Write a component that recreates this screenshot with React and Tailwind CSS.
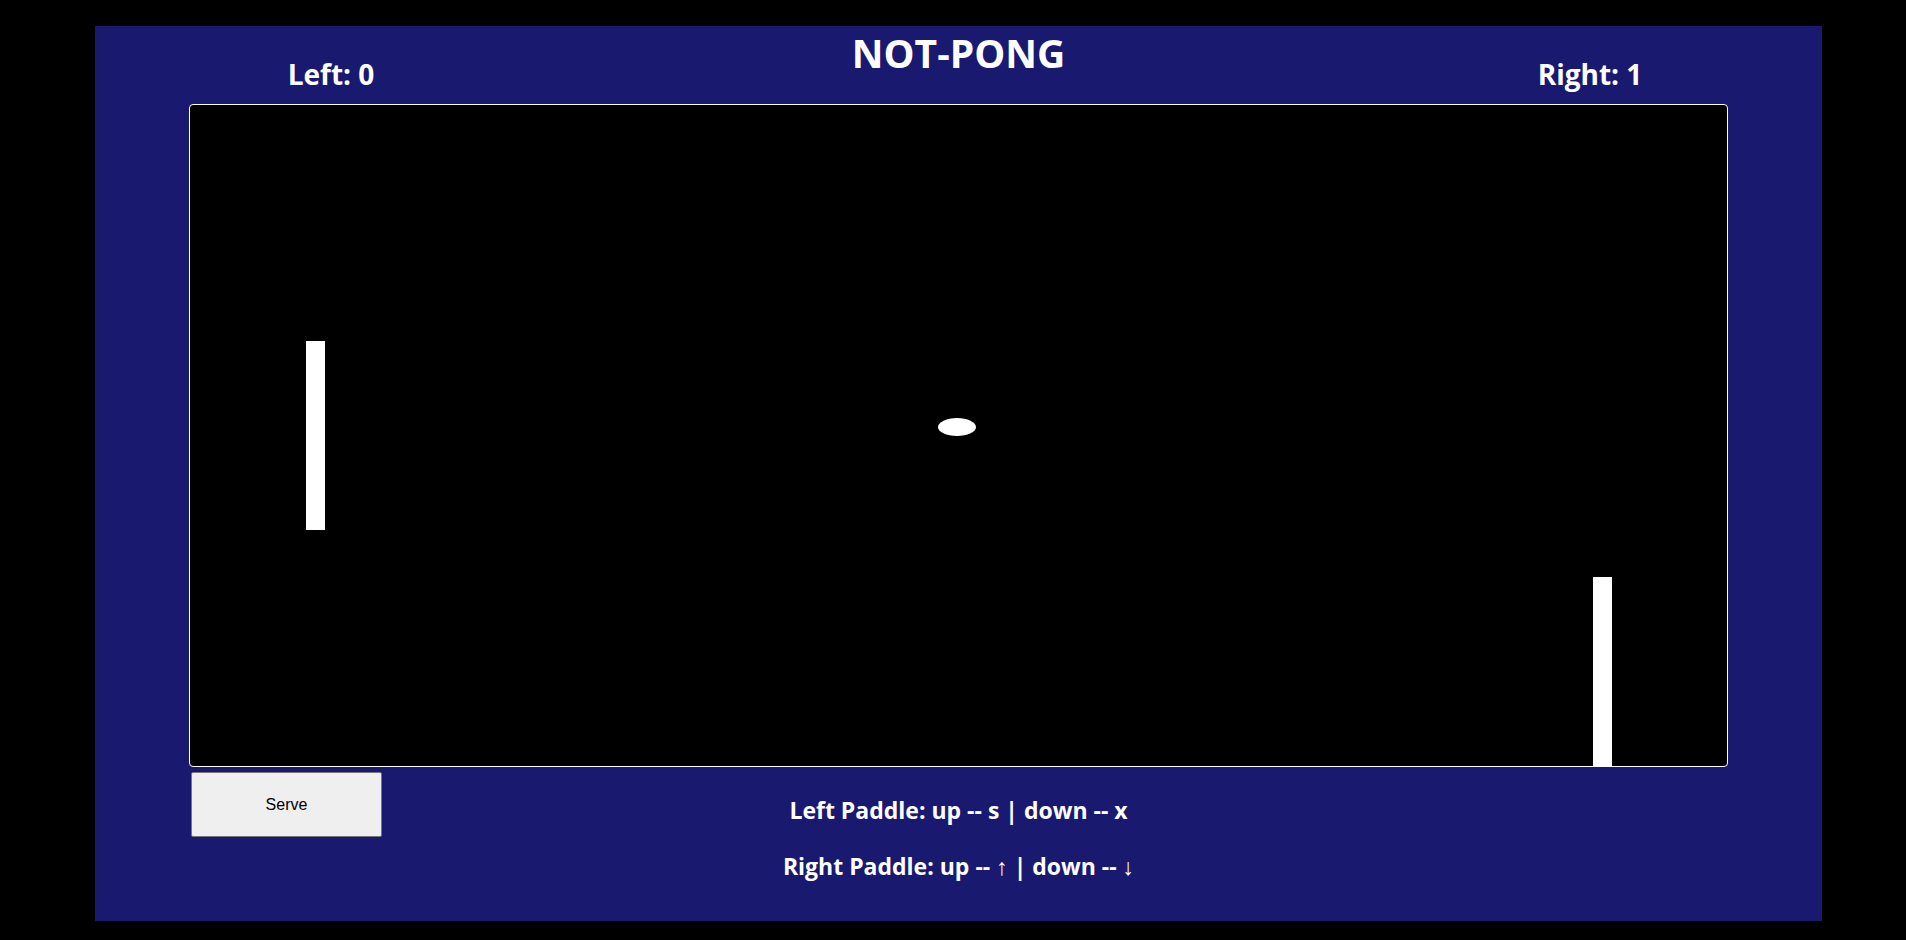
export default function App() {
  return (
    <div className="min-h-[940px] w-full bg-black pt-[26px] pl-[95px]">
      <div
        className="flex h-[895px] w-[1727px] flex-col bg-[#1a1970] text-white"
        style={{ fontFamily: '"Open Sans", "Noto Sans", sans-serif' }}
      >
        {/* header */}
        <div className="grid h-[78px] grid-cols-[472px_1fr_464px]">
          <div className="pt-[30px] text-center text-[28px] leading-[36px] font-bold">Left: 0</div>
          <div className="pr-[8px] text-center text-[39px] leading-[54px] font-bold">NOT-PONG</div>
          <div className="pt-[30px] text-center text-[28px] leading-[36px] font-bold">Right: 1</div>
        </div>

        {/* board */}
        <div className="relative mx-[94px] h-[663px] rounded-[4px] border border-white bg-black">
          <div className="absolute left-[116px] top-[236px] h-[189px] w-[19px] bg-white" />
          <div className="absolute left-[1403px] top-[472px] h-[189px] w-[19px] bg-white" />
          <div className="absolute left-[748px] top-[313px] h-[18px] w-[38px] rounded-[50%] bg-white" />
        </div>

        {/* controls */}
        <div className="grid grid-cols-[1fr_auto_1fr] pt-[5px]">
          <div className="pl-[96px]">
            <button
              className="h-[65px] w-[191px] rounded-[2px] border border-[#767676] bg-[#efefef] text-[16px] text-black"
              style={{ fontFamily: '"Liberation Sans", Arial, sans-serif' }}
            >
              Serve
            </button>
          </div>
          <div className="flex flex-col items-center pt-[23px] text-[23px] font-bold leading-[30px]">
            <p>Left Paddle: up -- s | down -- x</p>
            <p className="mt-[26px]">Right Paddle: up -- ↑ | down -- ↓</p>
          </div>
          <div />
        </div>
      </div>
    </div>
  );
}
